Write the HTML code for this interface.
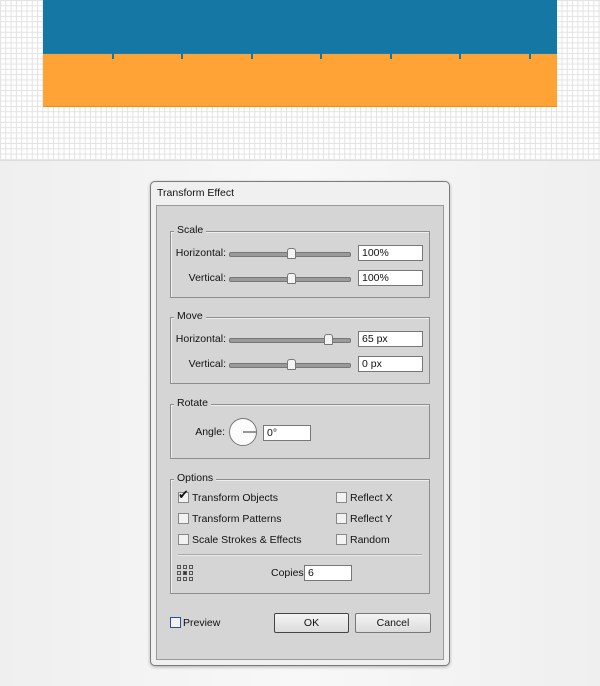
<!DOCTYPE html><html><head><style>
body{margin:0;width:600px;height:686px;overflow:hidden;background:linear-gradient(90deg,#efefef,#f8f8f8 50%,#efefef);font-family:"Liberation Sans",sans-serif;font-size:10.5px;color:#111;position:relative}
.grid{position:absolute;left:0;top:0;width:600px;height:160px;background-color:#fff;background-image:linear-gradient(#e2e2e2 1px,transparent 1px),linear-gradient(90deg,#e2e2e2 1px,transparent 1px);background-size:5.3px 5.3px;border-bottom:1px solid #ddd}
.a{position:absolute}
.r{position:absolute;text-align:right;width:80px}
.dlg{left:150px;top:181px;width:298px;height:483px;background:#f0f0f0;border:1px solid #7a7a7a;border-radius:5px;box-shadow:0 1px 3px rgba(0,0,0,.3)}
.in{left:156px;top:205px;width:286px;height:453px;background:#d5d5d5;border:1px solid #9a9a9a}
.g{border:1px solid #8e8e8e;box-shadow:1px 1px 0 #eee inset}
.lg{background:#d5d5d5;padding:0 3px}
.sl{height:3px;background:#9a9a9a;border:1px solid #777;border-radius:2px}
.th{width:7px;height:9px;background:#f4f4f4;border:1px solid #777;border-radius:3px 3px 1px 1px}
.tb{background:#fff;border:1px solid #777;height:14px;line-height:14px;padding-left:3px;box-sizing:content-box}
.cb{width:9px;height:9px;background:#f2f2f2;border:1px solid #888}
.btn{height:18px;border:1px solid #777;background:linear-gradient(#f4f4f4,#dcdcdc);text-align:center;line-height:18px;border-radius:2px}
</style></head><body>
<div class="grid"></div>
<div class="a" style="left:43px;top:0;width:514px;height:53px;background:#1577a3"></div>
<div class="a" style="left:43px;top:53px;width:514px;height:52px;background:#ffa337;border-top:1px solid #1a80aa;border-bottom:1px solid #f08a10"></div>
<div class="a" style="left:112px;top:53px;width:2px;height:6px;background:#1577a3"></div>
<div class="a" style="left:181px;top:53px;width:2px;height:6px;background:#1577a3"></div>
<div class="a" style="left:251px;top:53px;width:2px;height:6px;background:#1577a3"></div>
<div class="a" style="left:320px;top:53px;width:2px;height:6px;background:#1577a3"></div>
<div class="a" style="left:390px;top:53px;width:2px;height:6px;background:#1577a3"></div>
<div class="a" style="left:459px;top:53px;width:2px;height:6px;background:#1577a3"></div>
<div class="a" style="left:529px;top:53px;width:2px;height:6px;background:#1577a3"></div>

<div class="a dlg"></div>
<div class="a" style="left:157px;top:187px">Transform Effect</div>
<div class="a in"></div>

<div class="a g" style="left:170px;top:231px;width:258px;height:65px"></div>
<div class="a lg" style="left:174px;top:224px">Scale</div>
<div class="r" style="left:146px;top:247px">Horizontal:</div>
<div class="a sl" style="left:229px;top:252px;width:120px"></div>
<div class="a th" style="left:287px;top:248px"></div>
<div class="a tb" style="left:358px;top:245px;width:60px">100%</div>
<div class="r" style="left:146px;top:272px">Vertical:</div>
<div class="a sl" style="left:229px;top:277px;width:120px"></div>
<div class="a th" style="left:287px;top:273px"></div>
<div class="a tb" style="left:358px;top:270px;width:60px">100%</div>

<div class="a g" style="left:170px;top:317px;width:258px;height:65px"></div>
<div class="a lg" style="left:174px;top:310px">Move</div>
<div class="r" style="left:146px;top:333px">Horizontal:</div>
<div class="a sl" style="left:229px;top:338px;width:120px"></div>
<div class="a th" style="left:324px;top:334px"></div>
<div class="a tb" style="left:358px;top:331px;width:60px">65 px</div>
<div class="r" style="left:146px;top:358px">Vertical:</div>
<div class="a sl" style="left:229px;top:363px;width:120px"></div>
<div class="a th" style="left:287px;top:359px"></div>
<div class="a tb" style="left:358px;top:356px;width:60px">0 px</div>

<div class="a g" style="left:170px;top:404px;width:258px;height:53px"></div>
<div class="a lg" style="left:174px;top:397px">Rotate</div>
<div class="r" style="left:145px;top:426px">Angle:</div>
<svg class="a" style="left:228px;top:417px" width="30" height="30"><circle cx="15" cy="15" r="13.5" fill="#fcfcfc" stroke="#777"/><line x1="15" y1="15" x2="28" y2="15" stroke="#333"/></svg>
<div class="a tb" style="left:263px;top:425px;width:43px">0°</div>

<div class="a g" style="left:170px;top:479px;width:258px;height:113px"></div>
<div class="a lg" style="left:174px;top:472px">Options</div>
<div class="a cb" style="left:178px;top:492px"></div>
<div class="a" style="left:178px;top:487px;font-size:13px">✔</div>
<div class="a" style="left:192px;top:492px">Transform Objects</div>
<div class="a cb" style="left:178px;top:513px"></div>
<div class="a" style="left:192px;top:513px">Transform Patterns</div>
<div class="a cb" style="left:178px;top:534px"></div>
<div class="a" style="left:192px;top:534px">Scale Strokes &amp; Effects</div>
<div class="a cb" style="left:336px;top:492px"></div>
<div class="a" style="left:350px;top:492px">Reflect X</div>
<div class="a cb" style="left:336px;top:513px"></div>
<div class="a" style="left:350px;top:513px">Reflect Y</div>
<div class="a cb" style="left:336px;top:534px"></div>
<div class="a" style="left:350px;top:534px">Random</div>
<div class="a" style="left:178px;top:554px;width:244px;height:1px;background:#aaa;border-bottom:1px solid #e8e8e8"></div>
<svg class="a" style="left:177px;top:565px" width="17" height="17" fill="none" stroke="#555"><g><rect x="0.5" y="0.5" width="3" height="3"/><rect x="6.5" y="0.5" width="3" height="3"/><rect x="12.5" y="0.5" width="3" height="3"/><rect x="0.5" y="6.5" width="3" height="3"/><rect x="6.5" y="6.5" width="3" height="3" fill="#333"/><rect x="12.5" y="6.5" width="3" height="3"/><rect x="0.5" y="12.5" width="3" height="3"/><rect x="6.5" y="12.5" width="3" height="3"/><rect x="12.5" y="12.5" width="3" height="3"/></g></svg>
<div class="a" style="left:271px;top:567px">Copies</div>
<div class="a tb" style="left:304px;top:565px;width:43px">6</div>

<div class="a" style="left:170px;top:617px;width:9px;height:9px;border:1px solid #2a4f9a;background:#f2f2f2"></div>
<div class="a" style="left:183px;top:617px">Preview</div>
<div class="a btn" style="left:274px;top:613px;width:73px;border:1px solid #444">OK</div>
<div class="a btn" style="left:355px;top:613px;width:74px">Cancel</div>
</body></html>
